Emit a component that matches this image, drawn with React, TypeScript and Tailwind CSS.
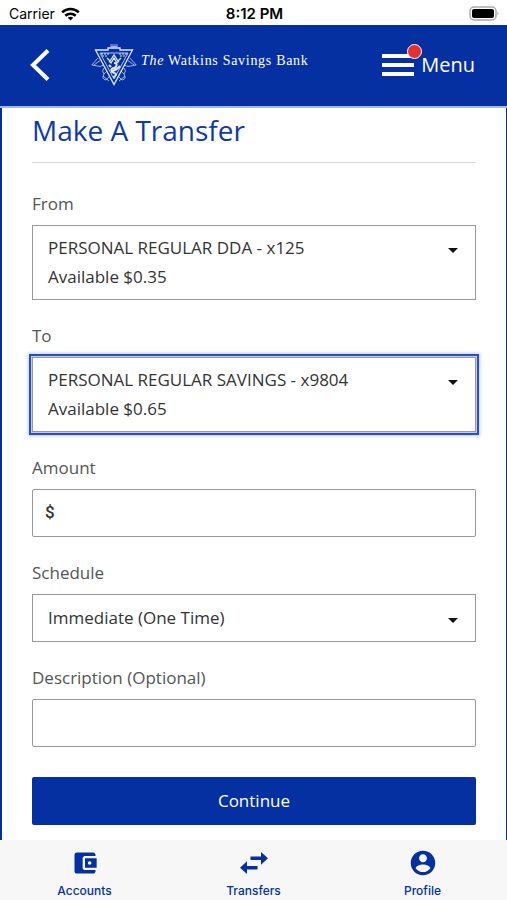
import type { ReactNode } from "react";

const sans = "font-['Open_Sans','Noto_Sans',sans-serif]";

function StatusBar() {
  return (
    <div className="grid h-[25px] grid-cols-3 items-center bg-white pt-0.5 pr-[7px] pl-[9px] font-[Inter,sans-serif] text-sm leading-5 text-black">
      <div className="flex items-center gap-1.5">
        <span>Carrier</span>
        <svg viewBox="0 0 19 14" className="h-3.5 w-[19px]" fill="none" stroke="black" strokeWidth="2.6" aria-hidden="true">
          <path d="M1.2 5.4C6 .9 13 .9 17.800 5.400" />
          <path d="M4.300 8.700C7.200 6 11.800 6 14.700 8.700" />
          <path d="M6.700 10.800C8.400 9.400 10.600 9.400 12.300 10.800L9.500 13.600Z" fill="black" stroke="none" />
        </svg>
      </div>
      <span className="text-center text-[15px] font-semibold">8:12 PM</span>
      <svg viewBox="0 0 31 15" className="h-[15px] w-[31px] justify-self-end" aria-hidden="true">
        <rect x="1" y="1" width="26" height="13" rx="4" fill="#fff" stroke="#aaa" strokeWidth="1.500" />
        <rect x="3" y="3" width="22" height="9" rx="2" fill="#000" />
        <path d="M28.500 5.500Q30.500 7.500 28.500 9.500Z" fill="#999" />
      </svg>
    </div>
  );
}

function Crest() {
  return (
    <svg viewBox="0 0 46 44" className="h-11 w-[46px]" fill="none" stroke="#dfe8ff" strokeWidth="1" aria-hidden="true">
      <path d="M4.500 7H17V5H29V7H41.500L23 41.500Z" strokeWidth="1.300" />
      <path d="M9 10H37L23 36Z" strokeWidth=".8" />
      <path d="M19 2H27M19.500 3.500H26.500" strokeWidth="1" opacity=".7" />
      <path d="M7 15 .8 22 9 23.500 13 22M39 15 45.200 22 37 23.500 33 22M3 22 9 17.500M43 22 37 17.500" opacity=".7" />
      <path d="M10 11H18M28 11H36M11 13H17M29 13H35" strokeDasharray="2 1" />
      <path d="M16 15 19 18 23 12 27 18 30 15M18 18 20 20 23 15 26 20 28 18" strokeWidth="1.300" />
      <path d="M23 20C27 20 26 24 23 25 19 26 20 29 23 30 27 31 24 34 22 34M20 24 18 22M26 26 29 23M20 29 26 26" strokeWidth="2" />
      <path
        d="M13 25Q10 28 13 31L16 28M13 31Q10 36 15 37L18 34M33 25Q36 28 33 31L30 28M33 31Q36 36 31 37L28 34M12 33 18 38M34 33 28 38"
        opacity=".7"
      />
    </svg>
  );
}

function Header() {
  return (
    <header className="flex h-[83px] items-center border-b-2 border-[#a9b5de] bg-[#0530a1] pr-8 pb-0.5 pl-[30px] text-white">
      <button type="button" aria-label="Back" className="flex">
        <svg viewBox="0 0 20 32" className="h-8 w-5" fill="none" stroke="currentColor" strokeWidth="4" aria-hidden="true">
          <path d="M18 1.500 3 16 18 30.500" />
        </svg>
      </button>
      <div className="ml-[41px] flex items-center gap-1">
        <Crest />
        <span className="pb-2 font-['Liberation_Serif',serif] text-sm tracking-wider whitespace-nowrap">
          <i>The</i> Watkins Savings Bank
        </span>
      </div>
      <button type="button" className={`${sans} ml-auto flex items-center gap-[7px] text-xl leading-7`}>
        <span className="relative flex w-8 flex-col gap-[5px]">
          <span className="h-1 bg-white" />
          <span className="h-1 bg-white" />
          <span className="h-1 bg-white" />
          <span className="absolute -top-2.5 -right-2 size-[15px] rounded-full border border-white bg-[#e0302f]" />
        </span>
        Menu
      </button>
    </header>
  );
}

function Field({ id, label, children }: { id: string; label: string; children: ReactNode }) {
  return (
    <div className="mb-6">
      <label htmlFor={id} className="mb-[9px] block text-[17px] leading-6 text-[#555]">
        {label}
      </label>
      {children}
    </div>
  );
}

function Picker({ id, value, detail, active }: { id: string; value: string; detail?: string; active?: boolean }) {
  return (
    <div
      className={`border border-[#999] px-[15px] text-[17px] text-[#333] ${detail ? "h-[75px] pt-[7px]" : "h-12 pt-2"} ${
        active ? "shadow-[0_0_0_1px_#c5cce0,0_0_0_3px_#2b50b8,0_0_3px_4px_#b9ccff]" : ""
      }`}
    >
      <div className="grid items-center">
        <select id={id} defaultValue={value} className="col-start-1 row-start-1 h-[29px] w-full appearance-none bg-transparent outline-none">
          <option>{value}</option>
        </select>
        <svg viewBox="0 0 10 5" className="pointer-events-none col-start-1 row-start-1 mt-1.5 mr-0.5 h-[5px] w-2.5 justify-self-end" fill="#111" aria-hidden="true">
          <path d="M0 0H10L5 5Z" />
        </svg>
      </div>
      {detail && <p className="leading-[29px]">{detail}</p>}
    </div>
  );
}

const tabs = [
  {
    label: "Accounts",
    icon: "M21 18v1c0 1.100-.9 2-2 2H5c-1.110 0-2-.9-2-2V5c0-1.100.89-2 2-2h14c1.100 0 2 .9 2 2v1h-9c-1.110 0-2 .9-2 2v8c0 1.100.89 2 2 2h9zm-9-2h10V8H12v8zm4-2.500c-.83 0-1.500-.67-1.500-1.500s.67-1.500 1.500-1.500 1.500.67 1.500 1.500-.67 1.500-1.500 1.500z",
  },
  {
    label: "Transfers",
    icon: "M24 8 18 2.500V6.500H9V9.500H18V13.500ZM0 16 6 10.500V14.500H15V17.500H6V21.500Z",
  },
  {
    label: "Profile",
    icon: "M12 1.500C6.200 1.500 1.500 6.200 1.500 12S6.200 22.500 12 22.500 22.500 17.800 22.500 12 17.800 1.500 12 1.500zm0 3c1.900 0 3.400 1.500 3.400 3.400s-1.500 3.400-3.400 3.400-3.400-1.500-3.400-3.400 1.500-3.400 3.400-3.400zm0 15.300c-2.600 0-4.950-1.340-6.300-3.380.03-2.090 4.200-3.230 6.300-3.230 2.090 0 6.270 1.140 6.300 3.230-1.350 2.040-3.700 3.380-6.300 3.380z",
  },
];

export default function App() {
  return (
    <div className="flex min-h-screen flex-col bg-white">
      <StatusBar />
      <Header />
      <main className={`${sans} flex-1 border-r border-l-2 border-[#0530a1] pt-[3px] pr-[30px] pb-[15px] pl-[30px]`}>
        <h1 className="border-b border-[#d8d8d8] pb-3 text-[28px] leading-[39px] text-[#0f3aa5]">Make A Transfer</h1>
        <form className="pt-[29px]" onSubmit={(event) => event.preventDefault()}>
          <Field id="from" label="From">
            <Picker id="from" value="PERSONAL REGULAR DDA - x125" detail="Available $0.35" />
          </Field>
          <Field id="to" label="To">
            <Picker id="to" value="PERSONAL REGULAR SAVINGS - x9804" detail="Available $0.65" active />
          </Field>
          <Field id="amount" label="Amount">
            <div className="flex h-12 items-center gap-2 rounded-xs border border-[#999] px-3 text-[17px] text-[#333]">
              <span className="font-[Roboto,sans-serif] font-medium">$</span>
              <input id="amount" inputMode="decimal" className="min-w-0 flex-1 bg-transparent outline-none" />
            </div>
          </Field>
          <Field id="schedule" label="Schedule">
            <Picker id="schedule" value="Immediate (One Time)" />
          </Field>
          <Field id="description" label="Description (Optional)">
            <input id="description" className="block h-12 w-full rounded-xs border border-[#999] px-3 text-[17px] text-[#333] outline-none" />
          </Field>
          <button type="submit" className="mt-[30px] block h-12 w-full rounded-xs bg-[#0530a1] text-[17px] text-white">
            Continue
          </button>
        </form>
      </main>
      <nav className="grid h-[60px] grid-cols-3 bg-[#f7f7f7] font-[Inter,sans-serif] text-xs font-medium text-[#0530a1]">
        {tabs.map((tab) => (
          <a key={tab.label} href={`#${tab.label.toLowerCase()}`} className="flex flex-col items-center pt-[9px]">
            <svg viewBox="0 0 24 24" className="size-7" fill="currentColor" aria-hidden="true">
              <path d={tab.icon} />
            </svg>
            <span className="pt-1.5 leading-4">{tab.label}</span>
          </a>
        ))}
      </nav>
    </div>
  );
}
